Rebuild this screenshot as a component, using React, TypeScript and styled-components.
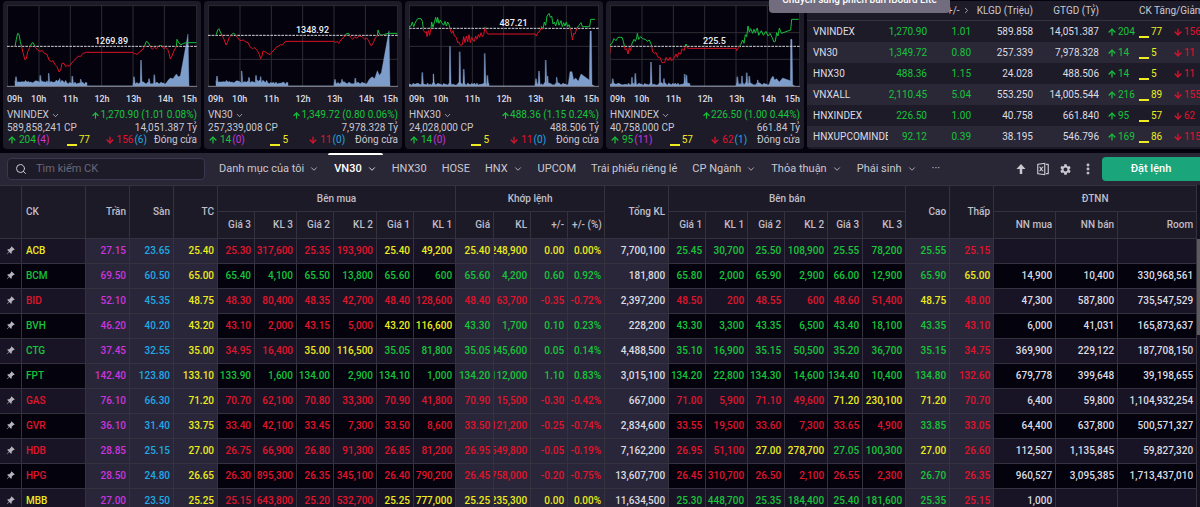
import React, { useId } from "react";
import styled, { createGlobalStyle } from "styled-components";
import { ArrowDown, ArrowUp, ChevronDown, ChevronRight, MoreVertical, Search } from "lucide-react";
import { BsPinAngleFill } from "react-icons/bs";
import { MdSettings } from "react-icons/md";
import { RiFileExcel2Line } from "react-icons/ri";

const tones = {
  up: "#17c43b",
  down: "#e0142c",
  ref: "#ecec1e",
  ceil: "#c936dc",
  floor: "#1fa9e6",
  plain: "#dcdce2",
};
type Tone = keyof typeof tones;

const GlobalStyle = createGlobalStyle`
  * { box-sizing: border-box; }
  body {
    margin: 0;
    background: #03020d;
    color: #dcdce2;
    font-family: Roboto, "Noto Sans", sans-serif;
    font-size: 10px;
    line-height: 12px;
  }
  button, input { font: inherit; color: inherit; }
  button { border: 0; padding: 0; background: none; cursor: pointer; }
`;

const Page = styled.div`
  display: flex;
  flex-direction: column;
  height: 100vh;
  overflow: hidden;
`;

/* ---------- market overview ---------- */

const Overview = styled.section`
  position: relative;
  display: grid;
  grid-template-columns: repeat(4, minmax(0, 198fr)) minmax(0, 393fr);
  gap: 3px;
  padding: 1px 0 4px 3px;
`;

const Card = styled.article`
  display: flex;
  flex-direction: column;
  padding: 4px 4px 3px;
  border-radius: 4px;
  background: #1e1b29;
`;

const ChartBox = styled.div`
  position: relative;
  height: 82px;
  background: #03020d;
  svg { display: block; width: 100%; height: 100%; }
`;

const ChartLabel = styled.span`
  position: absolute;
  left: 55%;
  transform: translate(-50%, -50%);
  font-size: 9px;
  font-weight: 500;
  color: #f0f0f4;
`;

const Hours = styled.div`
  display: grid;
  grid-template-columns: 1fr repeat(5, 2fr) 1fr;
  justify-items: center;
  margin: 6px 0 3px;
  font-size: 9px;
  font-weight: 500;
  white-space: nowrap;
  span:first-child { justify-self: start; }
  span:last-child { justify-self: end; }
`;

const InfoLine = styled.div`
  display: flex;
  justify-content: space-between;
  align-items: center;
  height: 12px;
  margin-top: 1px;
  color: #c9c8d0;
  white-space: nowrap;
`;

const IndexPicker = styled.button`
  display: flex;
  align-items: center;
  gap: 2px;
`;

const Counts = styled.div`
  display: grid;
  grid-template-columns: repeat(4, 1fr);
  align-items: center;
  justify-items: center;
  height: 12px;
  color: #c9c8d0;
  white-space: nowrap;
  > :first-child { justify-self: start; }
  > :last-child { justify-self: end; }
`;

const CountPair = styled.span`
  display: flex;
  align-items: center;
  gap: 1px;
  svg { margin-right: 2px; }
`;

const Toned = styled.span<{ $tone: Tone }>`
  display: inline-flex;
  align-items: center;
  color: ${(p) => tones[p.$tone]};
`;

const Dash = styled.i`
  align-self: flex-end;
  width: 10px;
  height: 2px;
  margin-right: 2px;
  background: currentColor;
`;

type Point = [number, number];
interface Market {
  name: string;
  reference: string;
  refY: number;
  grid: number[];
  volume: string;
  value: string;
  last: string;
  counts: [string, string, string, string, string];
  price: Point[];
  spikes: Point[];
  close: Point[];
}

const markets: Market[] = [
  {
    name: "VNINDEX", reference: "1269.89", refY: 139, grid: [],
    last: "1,270.90 (1.01 0.08%)", volume: "589,858,241 CP", value: "14,051.387 Tỷ",
    counts: ["204", "(4)", "77", "156", "(6)"],
    price: [[46,140],[50,118],[54,100],[58,103],[62,125],[66,140],[70,158],[76,180],[80,176],[84,155],[90,143],[96,130],[100,128],[104,135],[108,143],[114,150],[120,154],[128,152],[134,160],[142,163],[148,180],[155,185],[160,182],[166,194],[172,200],[178,216],[183,210],[187,190],[193,190],[198,200],[204,195],[208,199],[214,192],[222,182],[230,175],[236,168],[242,170],[250,160],[260,157],[400,157],[404,162],[408,160],[412,164],[420,155],[428,150],[434,140],[440,124],[446,128],[452,140],[458,148],[464,142],[470,146],[478,137],[486,137],[492,146],[498,142],[504,148],[508,160],[512,177],[518,165],[524,150],[530,140],[532,118],[538,130],[544,134],[552,130],[560,128],[590,128]],
    spikes: [[49,230],[122,226],[147,220],[180,236],[218,228],[243,238],[403,230],[424,180],[448,236],[464,224]],
    close: [[506,240],[512,234],[520,236],[530,222],[536,230],[542,228],[565,102],[568,258]],
  },
  {
    name: "VN30", reference: "1348.92", refY: 106, grid: [178],
    last: "1,349.72 (0.80 0.06%)", volume: "257,339,008 CP", value: "7,978.328 Tỷ",
    counts: ["14", "(0)", "5", "11", "(0)"],
    price: [[47,104],[51,90],[55,86],[59,96],[64,105],[70,118],[76,135],[80,128],[86,112],[92,105],[98,99],[104,104],[110,112],[118,122],[128,120],[136,126],[142,128],[148,140],[156,146],[162,143],[170,152],[176,164],[180,176],[184,168],[187,153],[194,156],[200,160],[208,164],[214,156],[220,150],[226,142],[234,138],[240,134],[246,135],[254,124],[262,124],[400,124],[404,128],[410,124],[414,130],[422,118],[430,112],[436,102],[444,100],[450,112],[456,118],[462,110],[468,114],[476,108],[484,110],[492,118],[498,114],[504,122],[508,132],[512,138],[518,128],[524,114],[530,108],[532,90],[537,103],[544,106],[552,103],[562,100],[590,100]],
    spikes: [[49,228],[123,213],[145,232],[166,226],[180,230],[403,238],[424,238],[464,234]],
    close: [[506,238],[514,230],[522,236],[530,212],[536,226],[542,218],[565,92],[568,258]],
  },
  {
    name: "HNX30", reference: "487.21", refY: 85, grid: [139],
    last: "488.36 (1.15 0.24%)", volume: "24,028,000 CP", value: "488.506 Tỷ",
    counts: ["14", "(0)", "5", "11", "(0)"],
    price: [[22,115],[22,80],[28,78],[32,66],[36,80],[40,70],[44,62],[48,56],[58,56],[62,64],[66,92],[70,98],[74,95],[76,110],[80,92],[84,106],[88,84],[90,66],[94,82],[98,68],[102,52],[106,68],[108,52],[112,70],[116,60],[120,68],[126,76],[130,64],[134,78],[138,66],[142,74],[146,90],[150,100],[154,92],[158,108],[164,112],[168,128],[172,126],[176,136],[182,134],[186,110],[190,128],[194,108],[198,126],[202,104],[206,128],[210,112],[214,120],[218,124],[222,108],[226,118],[230,104],[234,112],[238,98],[242,110],[246,104],[250,82],[254,95],[258,102],[400,102],[404,108],[408,98],[412,96],[416,90],[420,80],[424,88],[428,66],[432,76],[436,48],[442,40],[446,52],[450,48],[454,72],[458,66],[462,78],[468,58],[472,76],[478,62],[482,80],[486,68],[490,78],[494,66],[498,80],[502,74],[508,92],[512,120],[516,100],[520,102],[526,84],[532,76],[538,68],[542,80],[564,80],[567,58],[580,58]],
    spikes: [[62,217],[95,222],[145,139],[174,155],[186,207],[249,160],[257,226],[403,236],[412,213],[432,180],[438,228],[465,232]],
    close: [[505,215],[511,215],[516,240],[522,234],[530,244],[538,222],[563,240],[565,93],[569,93],[571,254],[578,258]],
  },
  {
    name: "HNXINDEX", reference: "225.5", refY: 139, grid: [98, 178],
    last: "226.50 (1.00 0.44%)", volume: "40,758,000 CP", value: "661.84 Tỷ",
    counts: ["95", "(11)", "57", "62", "(1)"],
    price: [[22,160],[22,135],[28,130],[34,116],[40,122],[46,112],[58,112],[62,124],[68,150],[72,146],[76,162],[80,142],[84,152],[88,130],[94,118],[98,124],[102,114],[104,100],[108,118],[114,110],[120,116],[128,118],[134,124],[140,120],[146,134],[150,156],[156,160],[160,158],[166,172],[172,172],[178,188],[186,188],[190,172],[196,182],[202,172],[206,182],[212,178],[220,162],[224,172],[228,158],[234,162],[238,146],[244,152],[250,132],[254,144],[260,145],[400,145],[402,152],[408,142],[414,134],[420,120],[424,130],[428,104],[432,110],[436,78],[440,96],[444,86],[450,100],[454,88],[458,98],[464,84],[468,106],[476,92],[482,106],[490,94],[496,108],[502,100],[508,112],[514,126],[518,124],[522,98],[526,108],[530,84],[536,100],[564,90],[567,58],[588,58]],
    spikes: [[30,236],[88,232],[98,220],[145,186],[172,195],[184,236],[246,222],[252,226],[404,230],[418,228],[432,218],[440,228],[465,240]],
    close: [[505,236],[511,228],[516,240],[522,236],[530,246],[540,234],[563,242],[564,118],[568,118],[570,254],[576,258]],
  },
];

const BASELINE = 258;

/* Volume outline between two hours: a low noisy floor with the named peaks on it. */
function session(from: number, to: number, spikes: Point[], thin: boolean): Point[] {
  const out: Point[] = [];
  for (let x = from; x <= to; x += 4) {
    const noise = Math.abs(Math.sin(x * 12.9898) * 43758.5453) % 1;
    const fade = thin ? 6 : x < 200 ? 14 : 9;
    out.push([x, BASELINE - fade + Math.round(noise * 8) - 4]);
  }
  spikes
    .filter(([x]) => x >= from && x <= to)
    .forEach(([x, y]) => out.push([x - 2, BASELINE - 10], [x - 1, y], [x + 1, y], [x + 3, BASELINE - 10]));
  out.sort((a, b) => a[0] - b[0]);
  return [[from, BASELINE], ...out];
}

const toPoints = (points: Point[]) => points.map((p) => p.join(",")).join(" ");

function PriceChart({ market }: { market: Market }) {
  const id = useId();
  const thin = market.name.startsWith("HNX");
  const start = thin ? 22 : 46;
  const volume: Point[] = [
    ...session(start, 262, market.spikes, thin),
    [262, BASELINE],
    ...session(400, 502, market.spikes, thin),
    ...market.close,
  ];
  return (
    <ChartBox>
      <svg viewBox="22 15 570 246" preserveAspectRatio="none" aria-hidden="true">
        <clipPath id={`${id}a`}><rect x="22" y="15" width="570" height={market.refY - 15} /></clipPath>
        <clipPath id={`${id}b`}><rect x="22" y={market.refY} width="570" height="200" /></clipPath>
        <g stroke="#2f2e34" strokeWidth="3" fill="none">
          {[118, 212, 306, 400, 494].map((x) => <path key={x} d={`M${x} 15V258`} />)}
          {[17, ...market.grid].map((y) => <path key={y} d={`M22 ${y}H592`} />)}
          <path d="M23 15V258M591 15V258" />
        </g>
        <polygon points={toPoints(volume)} fill="#7d9dcb" stroke="#8fb0de" strokeWidth="1" />
        <path d="M22 259H592" stroke="#8a8994" strokeWidth="3" />
        <path d={`M22 ${market.refY}H592`} stroke="#d5d5d8" strokeWidth="3" strokeDasharray="8 3" />
        <g fill="none" strokeWidth="3">
          <polyline points={toPoints(market.price)} stroke="#17c03c" clipPath={`url(#${id}a)`} />
          <polyline points={toPoints(market.price)} stroke="#dc1226" clipPath={`url(#${id}b)`} />
        </g>
      </svg>
      <ChartLabel style={{ top: Math.round((market.refY - 31) / 3) }}>{market.reference}</ChartLabel>
    </ChartBox>
  );
}

function MarketCard({ market }: { market: Market }) {
  const [up, ceil, same, down, floor] = market.counts;
  return (
    <Card>
      <PriceChart market={market} />
      <Hours>
        {["09h", "10h", "11h", "12h", "13h", "14h", "15h"].map((h) => <span key={h}>{h}</span>)}
      </Hours>
      <InfoLine>
        <IndexPicker>{market.name}<ChevronDown size={9} /></IndexPicker>
        <Toned $tone="up"><ArrowUp size={9} strokeWidth={3} />{market.last}</Toned>
      </InfoLine>
      <InfoLine>
        <span>{market.volume}</span>
        <span>{market.value}</span>
      </InfoLine>
      <Counts>
        <CountPair>
          <Toned $tone="up"><ArrowUp size={10} strokeWidth={3} />{up}</Toned>
          <Toned $tone="ceil">{ceil}</Toned>
        </CountPair>
        <Toned $tone="ref"><Dash />{same}</Toned>
        <CountPair>
          <Toned $tone="down"><ArrowDown size={10} strokeWidth={3} />{down}</Toned>
          <Toned $tone="floor">{floor}</Toned>
        </CountPair>
        <span>Đóng cửa</span>
      </Counts>
    </Card>
  );
}

const IndexPanel = styled.div`
  overflow: hidden;
  border-radius: 4px 0 0 4px;
  background: #1e1b29;
`;

const IndexTable = styled.table`
  width: 100%;
  table-layout: fixed;
  border-collapse: separate;
  border-spacing: 0;
  th, td {
    height: 21px;
    padding: 0 3px 0 0;
    overflow: hidden;
    text-align: right;
    white-space: nowrap;
  }
  th {
    height: 20px;
    border-bottom: 1px solid #353241;
    font-weight: 400;
    color: #c9c8d0;
  }
  tbody th {
    height: 21px;
    padding-left: 6px;
    border-bottom: 0;
    text-align: left;
    color: #dcdce2;
  }
  tbody tr:nth-child(even) { background: #2a2737; }
  thead th:last-child { padding-left: 37px; text-align: left; }
  thead svg { vertical-align: -1px; }
`;

const Breadth = styled.div`
  display: grid;
  grid-template-columns: 32px 34px auto;
  padding-left: 5px;
  svg { margin-right: 1px; }
`;

const indices = [
  ["VNINDEX", "1,270.90", "1.01", "589.858", "14,051.387", "204", "77", "156"],
  ["VN30", "1,349.72", "0.80", "257.339", "7,978.328", "14", "5", "11"],
  ["HNX30", "488.36", "1.15", "24.028", "488.506", "14", "5", "11"],
  ["VNXALL", "2,110.45", "5.04", "553.250", "14,005.544", "216", "89", "155"],
  ["HNXINDEX", "226.50", "1.00", "40.758", "661.840", "95", "57", "62"],
  ["HNXUPCOMINDEX", "92.12", "0.39", "38.195", "546.796", "169", "86", "115"],
];

function IndexList() {
  return (
    <IndexPanel>
      <IndexTable>
        <colgroup>
          {[81, 42, 44, 62, 66, 98].map((w, i) => <col key={i} style={{ width: w }} />)}
        </colgroup>
        <thead>
          <tr>
            <th />
            <th />
            <th>+/- <ChevronRight size={9} /></th>
            <th>KLGD (Triệu)</th>
            <th>GTGD (Tỷ)</th>
            <th>CK Tăng/Giảm</th>
          </tr>
        </thead>
        <tbody>
          {indices.map(([name, last, change, volume, value, up, same, down]) => (
            <tr key={name}>
              <th scope="row">{name}</th>
              <td><Toned $tone="up">{last}</Toned></td>
              <td><Toned $tone="up">{change}</Toned></td>
              <td>{volume}</td>
              <td>{value}</td>
              <td>
                <Breadth>
                  <Toned $tone="up"><ArrowUp size={10} strokeWidth={3} />{up}</Toned>
                  <Toned $tone="ref"><Dash />{same}</Toned>
                  <Toned $tone="down"><ArrowDown size={10} strokeWidth={3} />{down}</Toned>
                </Breadth>
              </td>
            </tr>
          ))}
        </tbody>
      </IndexTable>
    </IndexPanel>
  );
}

const Tooltip = styled.div`
  position: absolute;
  top: -8px;
  right: 250px;
  width: 181px;
  height: 21px;
  padding-top: 2px;
  border-radius: 4px;
  background: #716d7e;
  color: #fff;
  font-weight: 500;
  text-align: center;
  white-space: nowrap;
`;

/* ---------- toolbar ---------- */

const Toolbar = styled.nav`
  display: flex;
  align-items: center;
  height: 32px;
  flex: none;
  padding-left: 7px;
  background: #292635;
`;

const SearchBox = styled.label`
  display: flex;
  align-items: center;
  gap: 9px;
  width: 198px;
  height: 22px;
  margin-right: 8px;
  padding-left: 7px;
  border: 1px solid #3a3752;
  border-radius: 4px;
  background: #1e1b29;
  color: #c9c8d0;
  input {
    width: 150px;
    padding: 0;
    border: 0;
    outline: 0;
    background: none;
    font-size: 11px;
  }
  input::placeholder { color: #6a6776; opacity: 1; }
`;

const Tabs = styled.div`
  display: flex;
  flex: 1;
  align-self: stretch;
  gap: 3px;
`;

const Tab = styled.button<{ $active?: boolean }>`
  display: flex;
  align-items: center;
  gap: 5px;
  padding: 0 6px;
  border-top: 2px solid ${(p) => (p.$active ? "#fff" : "transparent")};
  border-bottom: 2px solid transparent;
  border-radius: 2px;
  color: ${(p) => (p.$active ? "#fff" : "#c9c8d0")};
  font-size: 11px;
  font-weight: ${(p) => (p.$active ? 500 : 400)};
  white-space: nowrap;
`;

const Tools = styled.div`
  display: flex;
  align-items: center;
  gap: 9px;
  margin-right: 7px;
  color: #c9c8d0;
  button { display: flex; }
`;

const OrderButton = styled.button`
  width: 98px;
  height: 24px;
  border-radius: 4px 0 0 4px;
  background: #1ba57b;
  color: #fff;
  font-size: 11px;
  font-weight: 500;
`;

const tabs: { label: string; menu?: boolean; active?: boolean }[] = [
  { label: "Danh mục của tôi", menu: true },
  { label: "VN30", menu: true, active: true },
  { label: "HNX30" },
  { label: "HOSE" },
  { label: "HNX", menu: true },
  { label: "UPCOM" },
  { label: "Trái phiếu riêng lẻ" },
  { label: "CP Ngành", menu: true },
  { label: "Thỏa thuận", menu: true },
  { label: "Phái sinh", menu: true },
  { label: "···" },
];

/* ---------- price board ---------- */

const Board = styled.main`
  display: flex;
  flex: 1;
  min-height: 0;
  background: #1e1b29;
`;

const BoardBody = styled.div`
  flex: 1;
  min-width: 0;
  overflow: hidden;
`;

const ScrollTrack = styled.div`
  width: 3px;
  padding-top: 54px;
  background: #14121f;
`;

const ScrollThumb = styled.div`
  height: 96px;
  background: #5b5a5c;
`;

const Quotes = styled.table`
  width: 100%;
  table-layout: fixed;
  border-collapse: separate;
  border-spacing: 0;
  font-weight: 500;
  th, td {
    padding: 0;
    border-right: 1px solid #35323f;
    border-bottom: 1px solid #35323f;
  }
  thead th {
    height: 27px;
    background: #1d1a27;
    color: #bfbec8;
    font-weight: 500;
    white-space: nowrap;
  }
  thead tr:first-child th { border-top: 1px solid #35323f; }
  tbody tr { height: 25px; background: #191425; }
  tbody tr:nth-child(even) { background: #03020d; }
  td:first-child { text-align: center; color: #b5b4bd; }
  td:first-child svg { display: inline-block; vertical-align: -1px; }
`;

const GroupHead = styled.th`
  text-align: center;
`;

const Head = styled.th<{ $left?: boolean }>`
  && { padding: 0 3px 0 4px; }
  text-align: ${(p) => (p.$left ? "left" : "right")};
`;

const Cell = styled.td<{ $tone: Tone; $raised?: boolean }>`
  background: ${(p) => (p.$raised ? "#2a2639" : "transparent")};
  color: ${(p) => tones[p.$tone]};
`;

const Amount = styled.div<{ $left?: boolean }>`
  display: flex;
  justify-content: ${(p) => (p.$left ? "flex-start" : "flex-end")};
  padding: 0 3px 0 ${(p) => (p.$left ? 4 : 0)}px;
  overflow: hidden;
  white-space: nowrap;
`;

const columnWidths = [22, 64, 44, 44, 44, 37, 42, 37, 43, 37, 42, 38, 37, 37, 37, 64, 37, 42, 37, 43, 35, 43, 44, 44, 62, 62, 79];

/* code, ceiling, floor, reference | bids | match | total | asks | high, low | foreign */
const quoteLines = [
  "ACB 27.15 23.65 25.40 25.30 317,600 25.35 193,900 25.40 49,200 25.40 248,900 0.00 0.00% 7,700,100 25.45 30,700 25.50 108,900 25.55 78,200 25.55 25.15 - - -",
  "BCM 69.50 60.50 65.00 65.40 4,100 65.50 13,800 65.60 600 65.60 4,200 0.60 0.92% 181,800 65.80 2,000 65.90 2,900 66.00 12,900 65.90 65.00 14,900 10,400 330,968,561",
  "BID 52.10 45.35 48.75 48.30 80,400 48.35 42,700 48.40 128,600 48.40 63,700 -0.35 -0.72% 2,397,200 48.50 200 48.55 600 48.60 51,400 48.75 48.00 47,300 587,800 735,547,529",
  "BVH 46.20 40.20 43.20 43.10 2,000 43.15 5,000 43.20 116,600 43.30 1,700 0.10 0.23% 228,200 43.30 3,300 43.35 6,500 43.40 18,100 43.35 43.10 6,000 41,031 165,873,637",
  "CTG 37.45 32.55 35.00 34.95 16,400 35.00 116,500 35.05 81,800 35.05 345,600 0.05 0.14% 4,488,500 35.10 16,900 35.15 50,500 35.20 36,700 35.15 34.75 369,900 229,122 187,708,150",
  "FPT 142.40 123.80 133.10 133.90 1,600 134.00 2,900 134.10 1,000 134.20 112,000 1.10 0.83% 3,015,100 134.20 22,800 134.30 14,600 134.40 10,400 134.80 132.60 679,778 399,648 39,198,655",
  "GAS 76.10 66.30 71.20 70.70 62,100 70.80 33,300 70.90 41,800 70.90 15,500 -0.30 -0.42% 667,000 71.00 5,900 71.10 49,600 71.20 230,100 71.20 70.70 6,400 59,800 1,104,932,254",
  "GVR 36.10 31.40 33.75 33.40 42,100 33.45 7,300 33.50 8,600 33.50 121,200 -0.25 -0.74% 2,834,600 33.55 19,500 33.60 7,300 33.65 4,900 33.85 33.05 64,400 637,800 500,571,327",
  "HDB 28.85 25.15 27.00 26.75 66,900 26.80 91,300 26.85 81,200 26.95 549,800 -0.05 -0.19% 7,162,200 26.95 51,100 27.00 278,700 27.05 100,300 27.00 26.60 112,500 1,135,845 59,827,320",
  "HPG 28.50 24.80 26.65 26.30 895,300 26.35 345,100 26.40 790,200 26.45 758,000 -0.20 -0.75% 13,607,700 26.45 310,700 26.50 2,100 26.55 2,300 26.70 26.35 960,527 3,095,385 1,713,437,010",
  "MBB 27.00 23.50 25.25 25.15 643,800 25.20 532,700 25.25 777,000 25.25 235,300 0.00 0.00% 11,634,500 25.30 448,700 25.35 184,400 25.40 181,600 25.35 25.15 1,000 - -",
];

/* For each column, the column whose price decides its colour. */
const priceColumn = [10, -1, -1, -1, 4, 4, 6, 6, 8, 8, 10, 10, 10, 10, -1, 15, 15, 17, 17, 19, 19, 21, 22, -1, -1, -1];
const raisedColumns = new Set([1, 2, 3, 10, 11, 12, 13, 14, 21, 22]);

function toneOf(cells: string[], column: number): Tone {
  if (column === 1) return "ceil";
  if (column === 2) return "floor";
  if (column === 3) return "ref";
  const source = priceColumn[column];
  if (source < 0) return "plain";
  const diff = Number(cells[source]) - Number(cells[3]);
  return diff > 0 ? "up" : diff < 0 ? "down" : "ref";
}

function PriceBoard() {
  return (
    <Board>
      <BoardBody>
        <Quotes>
          <colgroup>
            {columnWidths.map((w, i) => <col key={i} style={{ width: w }} />)}
          </colgroup>
          <thead>
            <tr>
              <th rowSpan={2} />
              <Head rowSpan={2} $left>CK</Head>
              <Head rowSpan={2}>Trần</Head>
              <Head rowSpan={2}>Sàn</Head>
              <Head rowSpan={2}>TC</Head>
              <GroupHead colSpan={6}>Bên mua</GroupHead>
              <GroupHead colSpan={4}>Khớp lệnh</GroupHead>
              <Head rowSpan={2}>Tổng KL</Head>
              <GroupHead colSpan={6}>Bên bán</GroupHead>
              <Head rowSpan={2}>Cao</Head>
              <Head rowSpan={2}>Thấp</Head>
              <GroupHead colSpan={3}>ĐTNN</GroupHead>
            </tr>
            <tr>
              {["Giá 3", "KL 3", "Giá 2", "KL 2", "Giá 1", "KL 1", "Giá", "KL", "+/-", "+/- (%)", "Giá 1", "KL 1", "Giá 2", "KL 2", "Giá 3", "KL 3", "NN mua", "NN bán", "Room"].map((h, i) => (
                <Head key={i}>{h}</Head>
              ))}
            </tr>
          </thead>
          <tbody>
            {quoteLines.map((line) => {
              const cells = line.split(" ");
              return (
                <tr key={cells[0]}>
                  <td><BsPinAngleFill size={9} /></td>
                  {cells.map((text, i) => (
                    <Cell key={i} $tone={toneOf(cells, i)} $raised={raisedColumns.has(i)}>
                      <Amount $left={i === 0}>{text === "-" ? "" : text}</Amount>
                    </Cell>
                  ))}
                </tr>
              );
            })}
          </tbody>
        </Quotes>
      </BoardBody>
      <ScrollTrack><ScrollThumb /></ScrollTrack>
    </Board>
  );
}

export default function App() {
  return (
    <Page>
      <GlobalStyle />
      <Overview>
        {markets.map((m) => <MarketCard key={m.name} market={m} />)}
        <IndexList />
        <Tooltip role="tooltip">Chuyển sang phiên bản iBoard Lite</Tooltip>
      </Overview>
      <Toolbar>
        <SearchBox>
          <Search size={12} />
          <input type="text" placeholder="Tìm kiếm CK" aria-label="Tìm kiếm CK" />
        </SearchBox>
        <Tabs>
          {tabs.map((t) => (
            <Tab key={t.label} $active={t.active}>
              {t.label}
              {t.menu && <ChevronDown size={10} />}
            </Tab>
          ))}
        </Tabs>
        <Tools>
          <button aria-label="Thu gọn">
            <svg width="12" height="12" viewBox="0 0 12 12" fill="currentColor">
              <path d="M6 1 10.500 6H7.250V11H4.750V6H1.500Z" />
            </svg>
          </button>
          <button aria-label="Xuất Excel"><RiFileExcel2Line size={14} /></button>
          <button aria-label="Cài đặt"><MdSettings size={13} /></button>
          <button aria-label="Thêm"><MoreVertical size={14} strokeWidth={3} /></button>
        </Tools>
        <OrderButton>Đặt lệnh</OrderButton>
      </Toolbar>
      <PriceBoard />
    </Page>
  );
}
